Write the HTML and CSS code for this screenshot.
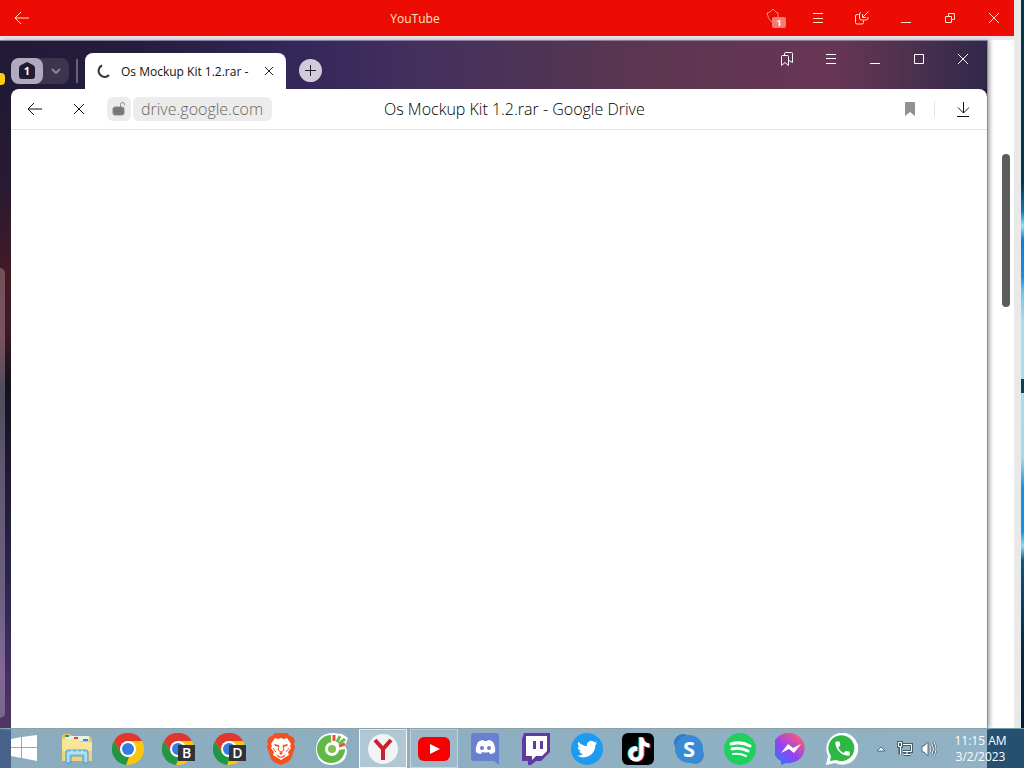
FILE: index.html
```html
<!DOCTYPE html>
<html lang="en">
<head>
  <meta charset="UTF-8">
  <meta name="viewport" content="width=device-width, initial-scale=1.0">
  <title>YouTube</title>
  <link rel="stylesheet" href="styles.css">
</head>
<body>
  <div class="workspace">
    <div class="outer-window">
      <header class="titlebar">
        <button class="back" aria-label="Back"><svg width="16" height="16" viewBox="0 0 16 16"><path d="M15 8H1M7 2L1 8l6 6"/></svg></button>
        <div class="window-title">YouTube</div>
        <div class="controls">
          <button class="shield" aria-label="Protect">
            <svg width="20" height="20" viewBox="0 0 20 20"><path class="faint" d="M8 14C5 12 4 9 3 5l3-1 3-3 3 3 2 1v5"/></svg>
            <span class="badge">1</span>
          </button>
          <button aria-label="Menu"><svg width="16" height="16" viewBox="0 0 16 16"><path d="M3 3.500h10M3 8.500h10M3 12.500h10"/></svg></button>
          <button aria-label="Picture in picture"><svg width="16" height="16" viewBox="0 0 16 16"><path d="M4.500 4.500H3q-1.500 0-1.500 1.500v6.500Q1.500 14 3 14h5q1.500 0 1.500-1.500V11M7 2.500q-1.500 0-1.500 1.500v4q0 2 2 2h4.500q2 0 2-2V7M14.500 1.500l-6 6M8.500 4v3.500H12"/></svg></button>
          <button aria-label="Minimize"><svg width="16" height="16" viewBox="0 0 16 16"><path d="M3 12.500h10"/></svg></button>
          <button aria-label="Restore"><svg width="16" height="16" viewBox="0 0 16 16"><path d="M3.500 6.500h6v6h-6zM6.500 6.500v-3h6v6h-3"/></svg></button>
          <button aria-label="Close"><svg width="16" height="16" viewBox="0 0 16 16"><path d="M3 3l10 10M13 3L3 13"/></svg></button>
        </div>
      </header>
      <main class="page">
        <section class="inner-window">
          <span class="side-dot"></span>
          <span class="side-panel"></span>
          <div class="tabstrip">
            <div class="tab-group">
              <button class="count" aria-label="Tab group">
                <svg width="18" height="18" viewBox="0 0 18 18"><path d="M9 0l6 3q2 1 2 3v8q0 3-3 3H4q-3 0-3-3V6q0-2 2-3z"/><text x="9" y="13">1</text></svg>
              </button>
              <button class="expand" aria-label="Show groups"><svg width="12" height="12" viewBox="0 0 12 12"><path d="M2 4l4 4 4-4"/></svg></button>
            </div>
            <span class="strip-line"></span>
            <div class="tab">
              <svg class="spinner" width="14" height="14" viewBox="0 0 14 14"><path d="M5 1.500A6 6 0 1 0 12 11"/></svg>
              <span class="tab-name">Os Mockup Kit 1.2.rar -</span>
              <button class="tab-close" aria-label="Close tab"><svg width="10" height="10" viewBox="0 0 10 10"><path d="M1 1l8 8M9 1L1 9"/></svg></button>
            </div>
            <button class="new-tab" aria-label="New tab"><svg width="13" height="13" viewBox="0 0 13 13"><path d="M6.500 1v11M1 6.500h11"/></svg></button>
            <div class="tab-controls">
              <button aria-label="Bookmarks"><svg width="16" height="16" viewBox="0 0 16 16"><path d="M2.500 5.500q0-1 1-1h5q1 0 1 1v9L6 11.500l-3.500 3zM5.500 4.500v-2q0-1 1-1h6q1 0 1 1v9l-3.500-2"/></svg></button>
              <button aria-label="Menu"><svg width="16" height="16" viewBox="0 0 16 16"><path d="M3 3.500h10M3 7.500h10M3 12.500h10"/></svg></button>
              <button aria-label="Minimize"><svg width="16" height="16" viewBox="0 0 16 16"><path d="M3 12.500h10"/></svg></button>
              <button aria-label="Maximize"><svg width="16" height="16" viewBox="0 0 16 16"><path d="M3.500 3.500h9v9h-9z"/></svg></button>
              <button aria-label="Close"><svg width="16" height="16" viewBox="0 0 16 16"><path d="M3 3l10 10M13 3L3 13"/></svg></button>
            </div>
          </div>
          <div class="browser-body">
            <div class="addressbar">
              <button aria-label="Go back"><svg width="16" height="16" viewBox="0 0 16 16"><path d="M15 8H1M7 2L1 8l6 6"/></svg></button>
              <button aria-label="Stop loading"><svg width="12" height="12" viewBox="0 0 12 12"><path d="M1 1l10 10M11 1L1 11"/></svg></button>
              <button class="lock" aria-label="Site information"><svg width="16" height="16" viewBox="0 0 16 16"><rect x="2" y="6" width="11" height="8" rx="2"/><path d="M9.500 6V3.500q0-2 2-2t2 2v1"/></svg></button>
              <input class="url" type="text" aria-label="Address" value="drive.google.com">
              <div class="page-title">Os Mockup Kit 1.2.rar - Google Drive</div>
              <div class="page-actions">
                <button aria-label="Bookmark"><svg class="mark" width="16" height="16" viewBox="0 0 16 16"><path d="M3 2q0-1 1-1h8q1 0 1 1v13l-5-4-5 4z"/></svg></button>
                <span class="action-line"></span>
                <button aria-label="Downloads"><svg width="16" height="16" viewBox="0 0 16 16"><path d="M8.500 1v11M3 6.500l5.500 5.500L14 6.500M2 15.500h12"/></svg></button>
              </div>
            </div>
          </div>
        </section>
        <div class="scroll-track"><div class="scroll-thumb"></div></div>
      </main>
    </div>
  </div>

  <footer class="taskbar">
    <button class="start" aria-label="Start"><svg width="28" height="28" viewBox="0 0 28 28"><path fill="#fff" d="M1 4l10-2v10H1zM12 2l15-2v12H12zM1 13h10v10L1 21zM12 13h15v13l-15-3z"/></svg></button>
    <div class="apps">
      <button aria-label="File Explorer">
        <svg width="32" height="32" viewBox="0 0 32 32">
          <path fill="#e8c864" d="M1 3l2-2h6l2 2h18l2 3v22H1z"/>
          <path fill="#e8f1e4" d="M4 3h24v5H4z"/>
          <path fill="#2f9a4b" d="M4 2h4v2H4z"/><path fill="#d8452e" d="M13 4h4v2h-4z"/><path fill="#2a8edb" d="M22 6h5v2h-5z"/>
          <path fill="#f8e59a" d="M1 6h15l3 3h12v19H1z"/>
          <path fill="#f0d37c" d="M1 18h30v10H1z"/>
          <path fill="#8ecbe6" stroke="#4e9fc7" d="M5 30V19q0-2 2-2h18q2 0 2 2v11h-5v-7H10v7z"/>
          <path stroke="#d5f2fc" d="M7 29V20h18v9M11 20v-3M16 20v-3M21 20v-3" fill="none"/>
        </svg>
      </button>
      <button aria-label="Chrome"><svg width="32" height="32" viewBox="0 0 32 32"><use href="#chrome"/></svg></button>
      <button aria-label="Chrome, profile B"><svg width="34" height="32" viewBox="0 0 34 32"><use href="#chrome" width="32" height="32"/><rect x="16" y="12" width="17" height="16" fill="#303236"/><text class="profile" x="24.500" y="25">B</text></svg></button>
      <button aria-label="Chrome, profile D"><svg width="34" height="32" viewBox="0 0 34 32"><use href="#chrome" width="32" height="32"/><rect x="16" y="12" width="17" height="16" fill="#303236"/><text class="profile" x="24.500" y="25">D</text></svg></button>
      <button aria-label="Brave">
        <svg width="32" height="32" viewBox="0 0 32 32">
          <path fill="#f4511e" d="M10 0h12l3 3 3 1 2 4-1 3 1 3-4 12-3 3-7 3-7-3-3-3L2 14l1-3-1-3 2-4 3-1z"/>
          <path fill="#fff" d="M10 5l3 1 3-1 3 1 3-1 4 6-1 2 1 2-3 4 1 3-5 3-3 2-3-2-5-3 1-3-3-4 1-2-1-2z"/>
          <path fill="#f4511e" d="M9 11l5 1v2l-4-1zM23 11l-5 1v2l4-1zM14 20l2-1 2 1-2 2zM11 21l5 3 5-3-2 3-3 1-3-1z"/>
          <path fill="none" stroke="#f4511e" d="M14 13l-1 4 3 2 3-2-1-4M8 15l3 4M24 15l-3 4"/>
        </svg>
      </button>
      <button aria-label="Coc Coc">
        <svg width="32" height="32" viewBox="0 0 32 32">
          <path fill="#fff" d="M16 0Q0 1 0 17q1 15 16 15 15-1 15-15l-2-4 3-8-6-4z"/>
          <path fill="#60b848" d="M15 2a14 14 0 1 0 14 14l-6 1-8-9z"/>
          <circle cx="16" cy="16" r="7" fill="#fff"/><circle cx="16" cy="16" r="4" fill="#7fc34e"/>
          <path stroke="#e65339" stroke-width="3" d="M18 2v6M23 13l6-2"/><path stroke="#6bbd45" stroke-width="3" d="M21 9l3-6M23 11l6-5"/>
        </svg>
      </button>
      <button class="active" aria-label="Yandex Browser"><svg width="32" height="32" viewBox="0 0 32 32"><circle cx="16" cy="16" r="15" fill="#f1f3f5"/><path fill="none" stroke="#cb1f2b" stroke-width="4" d="M8 7l8 9 8-9M16 15v12"/></svg></button>
      <button class="open" aria-label="YouTube"><svg width="32" height="32" viewBox="0 0 32 32"><rect y="4" width="32" height="24" rx="6" fill="#f90000"/><path fill="#fff" d="M12 11l10 5-10 5z"/></svg></button>
      <button aria-label="Discord">
        <svg width="32" height="32" viewBox="0 0 32 32">
          <path fill="#6980cf" d="M5 0h22q3 0 3 3v29l-5-4H5q-3 0-3-3V3q0-3 3-3z"/>
          <path fill="#fff" d="M9 9q3-2 5-2l1 1h3l1-1q3 0 5 2 3 6 2 10-2 2-5 2l-1-2q-4 1-7 0l-1 2q-3 0-5-2-1-4 2-10z"/>
          <circle cx="13" cy="15" r="2" fill="#6980cf"/><circle cx="20" cy="15" r="2" fill="#6980cf"/>
        </svg>
      </button>
      <button aria-label="Twitch"><svg width="32" height="32" viewBox="0 0 32 32"><path fill="#5f3aa0" d="M4 0h26v19l-9 9h-5l-5 4H8v-4H2V6z"/><path fill="#fff" d="M6 3h21v15l-5 5h-6l-4 4v-4H6z"/><path fill="#5f3aa0" d="M13 8h3v8h-3zM20 8h3v8h-3z"/></svg></button>
      <button aria-label="Twitter">
        <svg width="32" height="32" viewBox="0 0 32 32">
          <circle cx="16" cy="16" r="16" fill="#1d9bf0"/>
          <path fill="#fff" transform="translate(6 6) scale(.85)" d="M23.953 4.57a10 10 0 01-2.825.775 4.958 4.958 0 002.163-2.723c-.951.555-2.005.959-3.127 1.184a4.92 4.92 0 00-8.384 4.482C7.69 8.095 4.067 6.13 1.64 3.162a4.822 4.822 0 00-.666 2.475c0 1.71.87 3.213 2.188 4.096a4.904 4.904 0 01-2.228-.616v.06a4.923 4.923 0 003.946 4.827 4.996 4.996 0 01-2.212.085 4.936 4.936 0 004.604 3.417 9.867 9.867 0 01-6.102 2.105c-.39 0-.779-.023-1.17-.067a13.995 13.995 0 007.557 2.209c9.053 0 13.998-7.496 13.998-13.985 0-.21 0-.42-.015-.63A9.935 9.935 0 0024 4.59z"/>
        </svg>
      </button>
      <button aria-label="TikTok">
        <svg width="32" height="32" viewBox="0 0 32 32">
          <defs><path id="note" d="M12.525.02c1.31-.02 2.61-.01 3.91-.02.08 1.53.63 3.09 1.75 4.17 1.12 1.11 2.7 1.62 4.24 1.79v4.03c-1.44-.05-2.89-.35-4.2-.97-.57-.26-1.1-.59-1.62-.93-.01 2.92.01 5.84-.02 8.75-.08 1.4-.54 2.79-1.35 3.94-1.31 1.92-3.58 3.17-5.91 3.21-1.43.08-2.86-.31-4.08-1.03-2.02-1.19-3.44-3.37-3.65-5.71-.02-.5-.03-1-.01-1.49.18-1.9 1.12-3.72 2.58-4.96 1.66-1.44 3.98-2.13 6.15-1.72.02 1.48-.04 2.96-.04 4.44-.99-.32-2.15-.23-3.02.37-.63.41-1.11 1.04-1.36 1.75-.21.51-.15 1.07-.14 1.61.24 1.64 1.82 3.02 3.5 2.87 1.12-.01 2.19-.66 2.77-1.61.19-.33.4-.67.41-1.06.1-1.79.06-3.57.07-5.36.01-4.03-.01-8.05.02-12.07z"/></defs>
          <rect width="32" height="32" rx="6" fill="#000"/>
          <use href="#note" fill="#25f4ee" x="4" y="4"/><use href="#note" fill="#fe2c55" x="6" y="5"/><use href="#note" fill="#fff" x="5" y="4.500"/>
        </svg>
      </button>
      <button aria-label="Skype"><svg width="32" height="32" viewBox="0 0 32 32"><circle cx="10" cy="10" r="9" fill="#3379bd"/><circle cx="22" cy="22" r="9" fill="#3f86ce"/><circle cx="16" cy="16" r="14" fill="#398ad4"/><text class="skype" x="16" y="24">S</text></svg></button>
      <button aria-label="Spotify"><svg width="32" height="32" viewBox="0 0 32 32"><circle cx="16" cy="16" r="16" fill="#1ed15c"/><path fill="none" stroke="#fff" stroke-linecap="round" stroke-width="3" d="M7 11q10-3 19 2M8 16q8-2 16 2"/><path fill="none" stroke="#fff" stroke-linecap="round" stroke-width="2" d="M9 21q7-1 13 2"/></svg></button>
      <button aria-label="Messenger">
        <svg width="32" height="32" viewBox="0 0 32 32">
          <defs><linearGradient id="msg" x1="0" y1="1" x2=".8" y2="0"><stop offset="0" stop-color="#1286ff"/><stop offset=".5" stop-color="#9541f4"/><stop offset="1" stop-color="#ff5d72"/></linearGradient></defs>
          <path fill="url(#msg)" d="M16 0a16 15 0 1 1-5 30l-5 2v-4A16 15 0 0 1 16 0z"/><path fill="#fff" d="M6 20l7-9 5 4 8-4-7 9-5-4z"/>
        </svg>
      </button>
      <button aria-label="WhatsApp"><svg width="32" height="32" viewBox="0 0 32 32"><path fill="#fff" d="M0 32l2-9A16 16 0 1 1 9 30z"/><path fill="#2eb843" d="M4 28l1-5a13 13 0 1 1 5 4z"/><path fill="#fff" transform="translate(7 6) scale(.8)" d="M6.620 10.790c1.440 2.830 3.760 5.140 6.590 6.590l2.200-2.200c.27-.27.67-.36 1.020-.24 1.120.37 2.330.57 3.570.57.55 0 1 .45 1 1V20c0 .55-.45 1-1 1-9.390 0-17-7.610-17-17 0-.55.45-1 1-1h3.500c.55 0 1 .45 1 1 0 1.250.2 2.450.57 3.570.11.35.03.74-.25 1.020l-2.200 2.200z"/></svg></button>
    </div>
    <div class="tray">
      <button aria-label="Show hidden icons"><svg width="10" height="10" viewBox="0 0 10 10"><path fill="#fff" stroke="#526f80" d="M1 7l4-4 4 4z"/></svg></button>
      <button aria-label="Network"><svg width="18" height="18" viewBox="0 0 18 18"><g fill="none" stroke="#465f6e" stroke-width="3"><path d="M7 4.500h8.500v7H6.500M11 12v2.500M7.500 14.500h7M2.500 2.500h3v4h-3zM4 6.500v8"/></g><g fill="none" stroke="#fff"><path d="M7 4.500h8.500v7H6.500M11 12v2.500M7.500 14.500h7M2.500 2.500h3v4h-3zM4.500 6.500v8"/></g></svg></button>
      <button aria-label="Volume"><svg width="18" height="18" viewBox="0 0 18 18"><path fill="#fff" stroke="#526f80" d="M2 6h2l4-4v14l-4-4H2z"/><path fill="none" stroke="#425c6c" stroke-width="2" d="M10 6q2 3 0 6M12 4q3 5 0 10M14 2q4 7 0 14"/><path fill="none" stroke="#fff" d="M10 6q2 3 0 6M12 4q3 5 0 10M14 2q4 7 0 14"/></svg></button>
    </div>
    <div class="clock"><time>11:15 AM</time><time>3/2/2023</time></div>
  </footer>

  <svg class="symbols" width="0" height="0">
    <symbol id="chrome" viewBox="0 0 32 32">
      <circle cx="16" cy="16" r="16" fill="#fdc60e"/>
      <path fill="#df382c" d="M2 8a16 16 0 0 1 28 0H16l-7 12z"/>
      <path fill="#219646" d="M2 8l7 12q3 4 8 4l-3 8A16 16 0 0 1 2 8z"/>
      <circle cx="16" cy="16" r="8" fill="#fff"/><circle cx="16" cy="16" r="6" fill="#317de4"/>
    </symbol>
  </svg>
</body>
</html>
```

FILE: styles.css
```css
* {
  box-sizing: border-box;
}
body {
  margin: 0;
  height: 100vh;
  display: flex;
  flex-direction: column;
  overflow: hidden;
  font-family: "Open Sans", "Noto Sans", sans-serif;
  color: #111;
}
button {
  display: flex;
  align-items: center;
  justify-content: center;
  flex-shrink: 0;
  padding: 0;
  border: none;
  background: none;
  color: inherit;
  font-family: inherit;
}
svg {
  display: block;
  flex-shrink: 0;
}
.symbols {
  position: absolute;
}

/* desktop */
.workspace {
  flex: 1;
  min-height: 0;
  display: flex;
  padding-right: 3px;
  background: linear-gradient(#08354f 0%, #08354f 25%, #0878ba 29%, #8fe0f5 31%, #087edb 33%, #168ee6 38%, #68c5f0 40%, #a8dcee 44%, #a8dcee 52%, #073e5c 52%, #073e5c 54%, #a8dcee 54%, #a0d9ec 63%, #1294e3 67%, #1294e3 73%, #8fdcf4 75%, #0b5687 77%, #042c4b 88%, #021c35 100%);
}
.outer-window {
  flex: 1;
  display: flex;
  flex-direction: column;
  background: #fff;
  border-right: 7px solid #e9e9e9;
}

/* outer window bar */
.titlebar {
  height: 36px;
  display: flex;
  align-items: center;
  background: #ec0c03;
  color: #ffe2c8;
}
.titlebar svg,
.tab-controls svg,
.addressbar svg {
  fill: none;
  stroke: currentColor;
}
.back {
  width: 44px;
  height: 36px;
}
.window-title {
  flex: 1;
  padding-left: 32px;
  text-align: center;
  font-size: 12px;
}
.controls {
  display: flex;
  gap: 4px;
}
.controls button {
  width: 40px;
  height: 36px;
}
.shield {
  position: relative;
}
.faint {
  opacity: 0.6;
}
.badge {
  position: absolute;
  left: 18px;
  top: 17px;
  width: 14px;
  height: 11px;
  border-radius: 2px;
  background: #f47c72;
  color: #fff;
  font-size: 9px;
  line-height: 11px;
  font-weight: bold;
}

/* window shown inside the page */
.page {
  flex: 1;
  min-height: 0;
  display: flex;
  padding-top: 4px;
  background: linear-gradient(#eee6ec 4px, #fff 4px);
}
.inner-window {
  position: relative;
  flex: 1;
  display: flex;
  flex-direction: column;
  padding-left: 11px;
  border-top: 1px solid #8a7fa0;
  border-right: 1px solid #8c8c8c;
  background: linear-gradient(#1e1834 0%, #271a32 20%, #421a26 34%, #3c1b27 42%, #15121f 50%, #1f1930 62%, #29244a 77%, #44305e 92%, #503765 100%);
  box-shadow: 2px 0 4px #aaa;
}
.side-dot {
  position: absolute;
  left: 0;
  top: 32px;
  width: 5px;
  height: 12px;
  border-radius: 0 4px 4px 0;
  background: #fbce08;
}
.side-panel {
  position: absolute;
  left: 0;
  top: 227px;
  bottom: 10px;
  width: 5px;
  border-radius: 0 5px 5px 0;
  background: linear-gradient(#725058, #7a545c 15%, #504c5c 28%, #605873 45%, #6b6080 72%, #83689a 90%, #786789);
}
.tabstrip {
  height: 48px;
  margin-left: -11px;
  padding-left: 11px;
  display: flex;
  background: linear-gradient(90deg, #211a36 0%, #261d3e 14%, #34275a 30%, #43305d 42%, #4f3456 55%, #5c3650 65%, #683655 84%, #51324f 91%, #30284b 100%);
}
.tab-group {
  width: 58px;
  height: 26px;
  margin-top: 17px;
  display: flex;
  border-radius: 8px;
  background: #3d344d;
}
.count {
  width: 32px;
  border-radius: 8px;
  background: #b0a9c0;
}
.count path {
  fill: #211a32;
}
.count text {
  fill: #fff;
  font-size: 11px;
  font-weight: bold;
  text-anchor: middle;
}
.expand {
  width: 26px;
}
.expand path {
  fill: none;
  stroke: #8c829b;
  stroke-width: 2;
}
.strip-line {
  width: 2px;
  height: 24px;
  margin: 18px 7px 0;
  background: #686076;
}
.tab {
  width: 201px;
  margin-top: 12px;
  padding: 0 12px;
  display: flex;
  align-items: center;
  border-radius: 8px 8px 0 0;
  background: #fff;
}
.spinner {
  margin-right: 10px;
  fill: none;
  stroke: #333;
  stroke-width: 2;
}
.tab-name {
  flex: 1;
  white-space: nowrap;
  font-size: 12px;
}
.tab-close svg,
.new-tab svg {
  fill: none;
  stroke: #222;
}
.new-tab {
  width: 23px;
  height: 23px;
  margin: 18px 0 0 13px;
  border-radius: 50%;
  background: #d2cbdc;
}
.tab-controls {
  display: flex;
  margin-left: auto;
  padding-right: 2px;
  color: #fff;
}
.tab-controls button {
  width: 44px;
  height: 36px;
}
.browser-body {
  flex: 1;
  border-radius: 8px 8px 0 0;
  background: #fff;
}
.addressbar {
  height: 41px;
  display: flex;
  align-items: center;
  padding: 0 2px;
  border-bottom: 1px solid #e4e4e6;
}
.addressbar button {
  width: 44px;
  height: 40px;
}
.addressbar .lock {
  width: 24px;
  height: 24px;
  margin: 0 2px 0 6px;
  border-radius: 6px;
  background: #ececec;
  color: #888;
}
.lock rect {
  fill: #777;
}
.url {
  width: 139px;
  height: 24px;
  padding: 0 8px;
  border: none;
  border-radius: 6px;
  background: #ececec;
  color: #666;
  font-family: inherit;
  font-size: 16px;
  font-weight: 300;
}
.page-title {
  margin-left: 112px;
  white-space: nowrap;
  font-size: 16px;
  font-weight: 300;
  color: #000;
}
.page-actions {
  display: flex;
  align-items: center;
  margin-left: auto;
}
.action-line {
  width: 1px;
  height: 16px;
  margin: 0 6px 0 2px;
  background: #e4e4e6;
}
.addressbar .mark {
  fill: #929292;
  stroke: none;
}
.scroll-track {
  width: 26px;
  padding: 114px 4px 0 14px;
}
.scroll-thumb {
  height: 153px;
  border-radius: 4px;
  background: #5c5c5c;
}

/* taskbar */
.taskbar {
  height: 40px;
  display: flex;
  border-top: 1px solid #769bad;
  background: linear-gradient(90deg, #46628a 11px, #8bacbf 11px, #91b1c5 calc(100% - 37px), #25506f calc(100% - 37px));
}
.start {
  width: 48px;
  margin-right: 5px;
}
.apps {
  display: flex;
  gap: 3px;
}
.apps button {
  width: 48px;
}
.apps .active {
  border: 1px solid #f2f7fa;
  background: #b1c7d3;
}
.apps .open {
  border: 1px solid #c3d5df;
  background: #9db8c8;
}
.profile {
  fill: #fff;
  font-size: 14px;
  font-weight: 600;
  text-anchor: middle;
}
.skype {
  fill: #fff;
  font-size: 22px;
  font-weight: bold;
  text-anchor: middle;
}
.tray {
  display: flex;
  margin-left: auto;
}
.tray button {
  width: 24px;
}
.clock {
  width: 75px;
  padding-top: 4px;
  margin-left: 2px;
  margin-right: 6px;
  display: flex;
  flex-direction: column;
  align-items: center;
  color: #fff;
  font-size: 12px;
  line-height: 16px;
}
```
